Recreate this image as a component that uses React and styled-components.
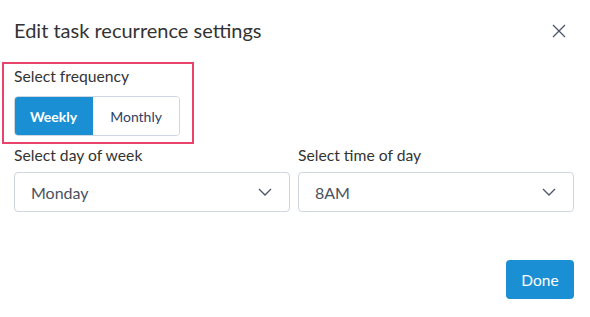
import styled, { createGlobalStyle } from "styled-components";

const GlobalStyle = createGlobalStyle`
  html, body {
    margin: 0;
    padding: 0;
    background: #ffffff;
    font-family: Lato, "Open Sans", sans-serif;
  }
`;

export default function App() {
  return (
    <>
      <GlobalStyle />
      <Dialog>
        <Header>
          <Title>Edit task recurrence settings</Title>
          <CloseBtn aria-label="Close">
            <svg width="14" height="14" viewBox="0 0 14 14">
              <path
                d="M1 1L13 13M13 1L1 13"
                stroke="#4a5568"
                strokeWidth="1.3"
                fill="none"
              />
            </svg>
          </CloseBtn>
        </Header>

        <Highlight>
          <Label>Select frequency</Label>
          <Segmented>
            <Segment $active>Weekly</Segment>
            <Segment>Monthly</Segment>
          </Segmented>
        </Highlight>

        <Fields>
          <Field>
            <Label>Select day of week</Label>
            <Select>
              <span>Monday</span>
              <Chevron />
            </Select>
          </Field>
          <Field>
            <Label>Select time of day</Label>
            <Select>
              <span>8AM</span>
              <Chevron />
            </Select>
          </Field>
        </Fields>

        <Footer>
          <DoneBtn>Done</DoneBtn>
        </Footer>
      </Dialog>
    </>
  );
}

function Chevron() {
  return (
    <svg width="14" height="8" viewBox="0 0 14 8">
      <path d="M1 1L7 7L13 1" stroke="#4a5568" strokeWidth="1.3" fill="none" />
    </svg>
  );
}

const Dialog = styled.div`
  width: 590px;
  height: 317px;
  box-sizing: border-box;
  padding: 18px 16px 0 14px;
  display: flex;
  flex-direction: column;
`;

const Header = styled.div`
  display: flex;
  align-items: center;
  justify-content: space-between;
  height: 24px;
  margin-bottom: 20px;
`;

const Title = styled.h2`
  margin: 0;
  font-size: 20px;
  line-height: 24px;
  font-weight: 400;
  color: #333333;
`;

const CloseBtn = styled.button`
  display: flex;
  align-items: center;
  justify-content: center;
  margin-right: 8px;
  margin-top: 2px;
  padding: 0;
  border: none;
  background: none;
  cursor: pointer;
`;

const Highlight = styled.div`
  align-self: flex-start;
  margin-left: -12px;
  padding: 3px 12px 6px 10px;
  border: 2px solid #e8436a;
`;

const Label = styled.div`
  font-size: 15.7px;
  line-height: 18px;
  color: #333333;
`;

const Segmented = styled.div`
  display: flex;
  margin-top: 11px;
  border: 1px solid #cfd6df;
  border-radius: 4px;
  overflow: hidden;
  width: fit-content;
`;

const Segment = styled.button`
  height: 38px;
  padding: 0 ${(p) => (p.$active ? "16px" : "17px")};
  border: none;
  font-family: inherit;
  font-size: 14px;
  font-weight: ${(p) => (p.$active ? 700 : 400)};
  color: ${(p) => (p.$active ? "#ffffff" : "#2f4166")};
  background: ${(p) => (p.$active ? "#1b8fd3" : "#ffffff")};
  cursor: pointer;
  &:first-child {
    margin: -1px 0 -1px -1px;
    height: 40px;
    border-radius: 4px 0 0 4px;
  }
`;

const Fields = styled.div`
  display: grid;
  grid-template-columns: 276px 1fr;
  column-gap: 8px;
  margin-top: 2px;
`;

const Field = styled.div`
  display: flex;
  flex-direction: column;
  gap: 8px;
`;

const Select = styled.div`
  height: 40px;
  box-sizing: border-box;
  border: 1px solid #cfd6df;
  border-radius: 4px;
  display: flex;
  align-items: center;
  justify-content: space-between;
  padding: 0 17px 0 16px;
  font-size: 16px;
  color: #4a5160;
`;

const Footer = styled.div`
  display: flex;
  justify-content: flex-end;
  margin-top: 48px;
`;

const DoneBtn = styled.button`
  width: 68px;
  height: 39px;
  border: none;
  border-radius: 4px;
  background: #1b8fd3;
  color: #ffffff;
  font-family: inherit;
  font-size: 15.5px;
  cursor: pointer;
`;
